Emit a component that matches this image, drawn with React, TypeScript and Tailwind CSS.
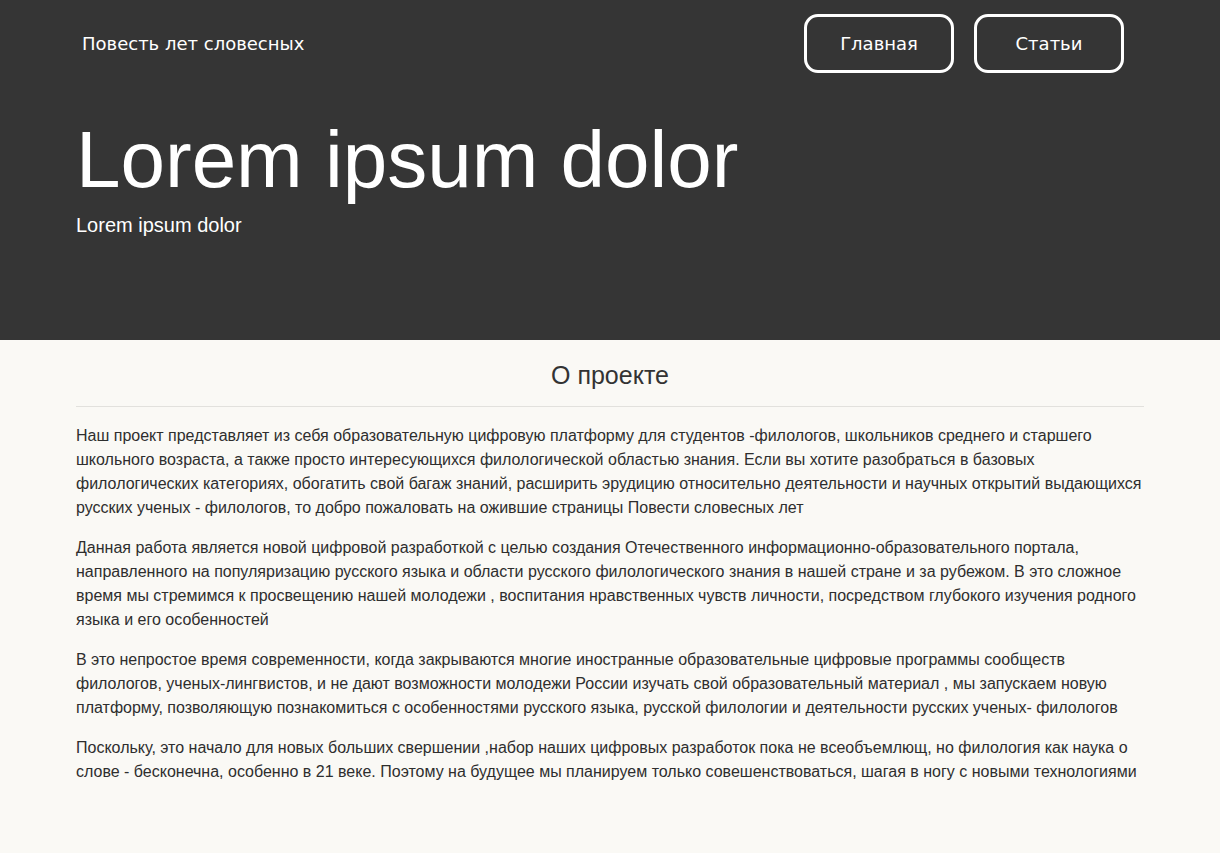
export default function App() {
  const paras = [
    "Наш проект представляет из себя образовательную цифровую платформу для студентов -филологов, школьников среднего и старшего школьного возраста, а также просто интересующихся филологической областью знания. Если вы хотите разобраться в базовых филологических категориях, обогатить свой багаж знаний, расширить эрудицию относительно деятельности и научных открытий выдающихся русских ученых - филологов, то добро пожаловать на ожившие страницы Повести словесных лет",
    "Данная работа является новой цифровой разработкой с целью создания Отечественного информационно-образовательного портала, направленного на популяризацию русского языка и области русского филологического знания в нашей стране и за рубежом. В это сложное время мы стремимся к просвещению нашей молодежи , воспитания нравственных чувств личности, посредством глубокого изучения родного языка и его особенностей",
    "В это непростое время современности, когда закрываются многие иностранные образовательные цифровые программы сообществ филологов, ученых-лингвистов, и не дают возможности молодежи России изучать свой образовательный материал , мы запускаем новую платформу, позволяющую познакомиться с особенностями русского языка, русской филологии и деятельности русских ученых- филологов",
    "Поскольку, это начало для новых больших свершении ,набор наших цифровых разработок пока не всеобъемлющ, но филология как наука о слове - бесконечна, особенно в 21 веке. Поэтому на будущее мы планируем только совешенствоваться, шагая в ногу с новыми технологиями",
  ];
  return (
    <div className="min-h-[853px] bg-[#faf9f5] font-['Liberation_Sans',Arial,sans-serif]">
      <header className="h-[340px] bg-[#353535] px-[76px] text-white">
        <nav className="flex h-[87px] items-center justify-between pl-[6px] pr-[20px] font-['DejaVu_Sans',sans-serif]">
          <span className="text-[18px] leading-[22px]">Повесть лет словесных</span>
          <div className="flex gap-[20px]">
            <button className="flex h-[59px] w-[150px] items-center justify-center rounded-[14px] border-[3px] border-white text-[18px] text-white">
              Главная
            </button>
            <button className="flex h-[59px] w-[150px] items-center justify-center rounded-[14px] border-[3px] border-white text-[18px] text-white">
              Статьи
            </button>
          </div>
        </nav>
        <h1 className="mt-[27px] text-[80px] leading-[92px] font-normal">Lorem ipsum dolor</h1>
        <p className="mt-[7px] text-[20px] leading-[24px]">Lorem ipsum dolor</p>
      </header>
      <main className="px-[76px] pb-[60px] text-[#2e2e2e]">
        <h2 className="border-b border-[#e2e1dd] pt-[19px] pb-[15px] text-center text-[25px] leading-[32px] text-[#333]">
          О проекте
        </h2>
        <div className="pt-[17px]">
          {paras.map((p, i) => (
            <p key={i} className="mb-[16px] text-[16px] leading-[24px]">
              {p}
            </p>
          ))}
        </div>
      </main>
    </div>
  );
}
